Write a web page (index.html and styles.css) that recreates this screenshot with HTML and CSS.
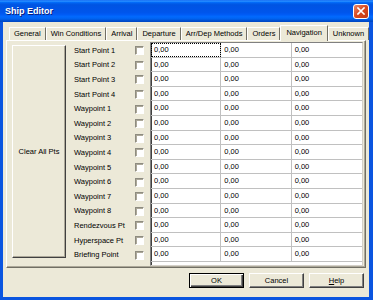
FILE: index.html
```html
<!DOCTYPE html>
<html lang="en">
<head>
  <meta charset="UTF-8">
  <title>Ship Editor</title>
  <link rel="stylesheet" href="styles.css">
</head>
<body>

  <div class="window">
    <div class="titlebar">
      <span class="title">Ship Editor</span>
      <button class="close">
        <svg width="8" height="8" viewBox="0 0 8 8">
          <path d="M1 1 L7 7 M7 1 L1 7" stroke="#fff" stroke-width="1.6" stroke-linecap="square" />
        </svg>
      </button>
    </div>

    <div class="client">
      <div class="tabs">
        <div class="tab">General</div>
        <div class="tab">Win Conditions</div>
        <div class="tab">Arrival</div>
        <div class="tab">Departure</div>
        <div class="tab">Arr/Dep Methods</div>
        <div class="tab">Orders</div>
        <div class="tab active">Navigation</div>
        <div class="tab">Unknown</div>
      </div>

      <div class="panel">
        <button class="clear-btn">Clear All Pts</button>

        <div class="points">
          <div class="point"><span>Start Point 1</span><span class="check"></span></div>
          <div class="point"><span>Start Point 2</span><span class="check"></span></div>
          <div class="point"><span>Start Point 3</span><span class="check"></span></div>
          <div class="point"><span>Start Point 4</span><span class="check"></span></div>
          <div class="point"><span>Waypoint 1</span><span class="check"></span></div>
          <div class="point"><span>Waypoint 2</span><span class="check"></span></div>
          <div class="point"><span>Waypoint 3</span><span class="check"></span></div>
          <div class="point"><span>Waypoint 4</span><span class="check"></span></div>
          <div class="point"><span>Waypoint 5</span><span class="check"></span></div>
          <div class="point"><span>Waypoint 6</span><span class="check"></span></div>
          <div class="point"><span>Waypoint 7</span><span class="check"></span></div>
          <div class="point"><span>Waypoint 8</span><span class="check"></span></div>
          <div class="point"><span>Rendezvous Pt</span><span class="check"></span></div>
          <div class="point"><span>Hyperspace Pt</span><span class="check"></span></div>
          <div class="point"><span>Briefing Point</span><span class="check"></span></div>
        </div>

        <div class="grid" id="grid"></div>
      </div>

      <div class="actions">
        <button class="btn default">OK</button>
        <button class="btn">Cancel</button>
        <button class="btn"><u>H</u>elp</button>
      </div>
    </div>
  </div>

  <script>
    const grid = document.getElementById("grid");

    for (let r = 0; r < 15; r++) {
      const row = document.createElement("div");
      row.className = "row";
      for (let c = 0; c < 3; c++) {
        const cell = document.createElement("div");
        cell.className = "cell";
        if (r === 0 && c === 0) {
          cell.classList.add("focus");
        }
        cell.textContent = "0,00";
        row.appendChild(cell);
      }
      grid.appendChild(row);
    }
  </script>

</body>
</html>
```

FILE: styles.css
```css
body {
  margin: 0;
  font-family: "Liberation Sans", Arial, sans-serif;
  font-size: 7.5px;
  color: #000;
}

button {
  font-family: inherit;
  font-size: inherit;
  color: #000;
  padding: 0;
}

.window {
  width: 373px;
  height: 300px;
  background-color: #0a55e0;
  display: flex;
  flex-direction: column;
}

.titlebar {
  height: 22px;
  flex: none;
  display: flex;
  align-items: center;
  justify-content: space-between;
  padding: 0 4px 0 5px;
  background: linear-gradient(to bottom, #0058ee 0%, #3593ff 4%, #288eff 6%, #127dff 8%, #036ffc 10%, #0262ee 14%, #0057e5 20%, #0054e3 24%, #0055eb 56%, #005bf5 66%, #026afe 76%, #0062ef 86%, #0052d6 92%, #0046c0 100%);
}

.title {
  color: #fff;
  font-weight: bold;
  font-size: 9px;
  text-shadow: 1px 1px 0 #0a1f7a;
}

.close {
  width: 16px;
  height: 15px;
  border: 1px solid #fff;
  border-radius: 3px;
  background: linear-gradient(to bottom right, #e8866a, #d8481f 50%, #c13a15);
  display: flex;
  align-items: center;
  justify-content: center;
}

.client {
  flex: 1;
  margin: 0 4px 3px 3px;
  padding: 3px 3px 0 3px;
  background-color: #ece9d8;
  display: flex;
  flex-direction: column;
}

.tabs {
  height: 15px;
  display: flex;
  align-items: flex-end;
  margin-left: 3px;
  position: relative;
  z-index: 1;
}

.tab {
  height: 13px;
  line-height: 12px;
  padding: 0 4px;
  box-sizing: border-box;
  white-space: nowrap;
  border-top: 1px solid #fff;
  border-left: 1px solid #fff;
  border-right: 1px solid #716f64;
}

.tab.active {
  height: 16px;
  line-height: 14px;
  margin-bottom: -1px;
  padding: 0 5px;
  background-color: #ece9d8;
}

.panel {
  height: 228px;
  box-sizing: border-box;
  border: 1px solid;
  border-color: #fff #716f64 #716f64 #fff;
  box-shadow: inset -1px -1px #aca899;
  display: flex;
}

.clear-btn {
  width: 54px;
  height: 213px;
  margin: 4px 0 0 5px;
  background-color: #ece9d8;
  border: 1px solid;
  border-color: #fff #404040 #404040 #fff;
  box-shadow: inset -1px -1px #aca899;
}

.points {
  width: 70px;
  margin-left: 8px;
  padding-top: 2px;
}

.point {
  height: 14.6px;
  display: flex;
  align-items: center;
  justify-content: space-between;
  white-space: nowrap;
}

.check {
  width: 9px;
  height: 9px;
  box-sizing: border-box;
  background-color: #fff;
  border: 1px solid;
  border-color: #8e8c80 #fff #fff #8e8c80;
  box-shadow: inset 1px 1px #aca899;
  margin-top: 1px;
}

.grid {
  flex: 1;
  margin: 1px 2px 1px 6px;
  background-color: #fff;
  border: 1px solid;
  border-color: #808080 #d4d0c8 #d4d0c8 #808080;
  box-shadow: inset 1px 0 #404040;
}

.row {
  height: 14.6px;
  box-sizing: border-box;
  display: grid;
  grid-template-columns: repeat(3, 1fr);
  border-bottom: 1px solid #c0c0c0;
}

.cell {
  padding-left: 3px;
  line-height: 13.6px;
  border-right: 1px solid #c0c0c0;
}

.cell:last-child {
  border-right: none;
}

.cell.focus {
  outline: 1px dotted #000;
  outline-offset: -1px;
}

.actions {
  display: flex;
  justify-content: flex-end;
  gap: 5px;
  margin: 5px 2px 0 0;
}

.btn {
  width: 55px;
  height: 15px;
  background-color: #ece9d8;
  border: 1px solid;
  border-color: #fff #404040 #404040 #fff;
  box-shadow: inset -1px -1px #808080;
}

.btn.default {
  border-color: #000;
  box-shadow: inset 1px 1px #fff, inset -1px -1px #404040, inset -2px -2px #808080;
}
```
